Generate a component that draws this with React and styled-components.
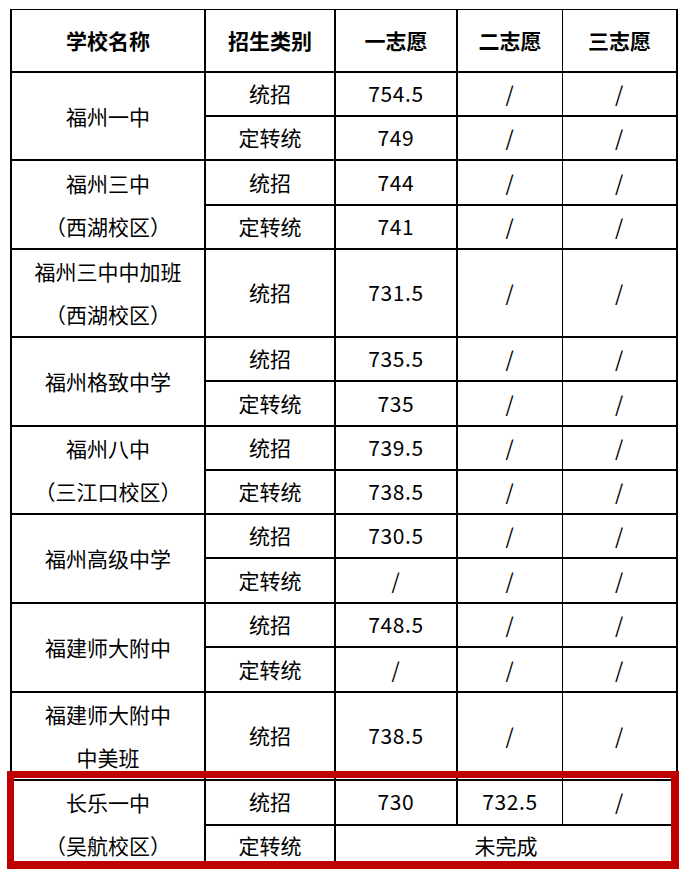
import React from 'react'
import styled, { createGlobalStyle } from 'styled-components';

const GlobalStyle = createGlobalStyle`
    html, body{
        margin: 0;
        padding: 0;
        background: #fff;
    }
    body{
        font-family: "Noto Sans CJK SC", "Microsoft YaHei", sans-serif;
        color: #000;
    }
`;

// unit heights of each sub row, from top to bottom
const unitHeights = [44, 44, 45, 44, 44, 44, 44, 45, 44, 44, 44, 45, 44, 45, 44, 43, 44, 43];

const schools = [
    { name: ['福州一中'], rows: [['统招', '754.5', '/', '/'], ['定转统', '749', '/', '/']] },
    { name: ['福州三中', '（西湖校区）'], rows: [['统招', '744', '/', '/'], ['定转统', '741', '/', '/']] },
    { name: ['福州三中中加班', '（西湖校区）'], tall: true, rows: [['统招', '731.5', '/', '/']] },
    { name: ['福州格致中学'], rows: [['统招', '735.5', '/', '/'], ['定转统', '735', '/', '/']] },
    { name: ['福州八中', '（三江口校区）'], rows: [['统招', '739.5', '/', '/'], ['定转统', '738.5', '/', '/']] },
    { name: ['福州高级中学'], rows: [['统招', '730.5', '/', '/'], ['定转统', '/', '/', '/']] },
    { name: ['福建师大附中'], rows: [['统招', '748.5', '/', '/'], ['定转统', '/', '/', '/']] },
    { name: ['福建师大附中', '中美班'], tall: true, rows: [['统招', '738.5', '/', '/']] },
    { name: ['长乐一中', '（吴航校区）'], rows: [['统招', '730', '732.5', '/'], ['定转统', { span: 3, text: '未完成' }]] },
];

function ScoreTable() {
    let unit = 0;
    const body = [];
    schools.forEach((school, si) => {
        school.rows.forEach((row, ri) => {
            const take = school.tall ? 2 : 1;
            const h = unitHeights.slice(unit, unit + take).reduce((a, b) => a + b, 0);
            unit += take;
            const cells = [];
            if (ri === 0) {
                cells.push(
                    <NameCell key="name" rowSpan={school.rows.length}>
                        {school.name.map((line) => <div key={line}>{line}</div>)}
                    </NameCell>
                );
            }
            cells.push(<Cell key="type">{row[0]}</Cell>);
            if (typeof row[1] === 'object') {
                cells.push(<Cell key="span" colSpan={row[1].span} $last>{row[1].text}</Cell>);
            } else {
                cells.push(<Cell key="c1" $num>{row[1]}</Cell>);
                cells.push(<Cell key="c2" $num $thin>{row[2]}</Cell>);
                cells.push(<Cell key="c3" $num $last>{row[3]}</Cell>);
            }
            body.push(<tr key={si + '-' + ri} style={{ height: h }}>{cells}</tr>);
        });
    });

    return (
        <Table>
            <colgroup>
                <col style={{ width: 194 }} />
                <col style={{ width: 130 }} />
                <col style={{ width: 122 }} />
                <col style={{ width: 105 }} />
                <col style={{ width: 115 }} />
            </colgroup>
            <thead>
                <tr>
                    <HeadCell>学校名称</HeadCell>
                    <HeadCell>招生类别</HeadCell>
                    <HeadCell>一志愿</HeadCell>
                    <HeadCell $thin>二志愿</HeadCell>
                    <HeadCell $last>三志愿</HeadCell>
                </tr>
            </thead>
            <tbody>{body}</tbody>
        </Table>
    )
}

function App() {
    return (
        <Page>
            <GlobalStyle />
            <Frame>
                <ScoreTable />
                <Highlight />
            </Frame>
        </Page>
    )
}

const Page = styled.div`
    width: 695px;
    height: 873px;
    overflow: hidden;
    background: #fff;
`;

const Frame = styled.div`
    position: relative;
    padding: 9px 0 0 10px;
`;

const Table = styled.table`
    table-layout: fixed;
    width: 668px;
    border-collapse: separate;
    border-spacing: 0;
    border-top: 1px solid #000;
    border-left: 2px solid #000;
    font-size: 21px;
    line-height: 28px;
`;

const Cell = styled.td`
    box-sizing: border-box;
    padding: 0 0 2px;
    text-align: center;
    vertical-align: middle;
    white-space: nowrap;
    border-bottom: 2px solid #000;
    border-right: ${props => props.$thin ? '1px' : '2px'} solid #000;
    font-weight: 400;
    letter-spacing: ${props => props.$num ? '0.6px' : '0'};
`;

const NameCell = styled(Cell)`
    padding: 0;
    line-height: 43px;
    font-feature-settings: "halt";
`;

const HeadCell = styled(Cell).attrs({ as: 'th' })`
    height: 63px;
    font-weight: 700;
`;

const Highlight = styled.div`
    position: absolute;
    left: 7px;
    top: 771px;
    width: 672px;
    height: 98px;
    box-sizing: border-box;
    border: 7px solid #c00000;
    border-right-width: 8px;
    border-bottom-width: 8px;
    pointer-events: none;
`;

export default App;
